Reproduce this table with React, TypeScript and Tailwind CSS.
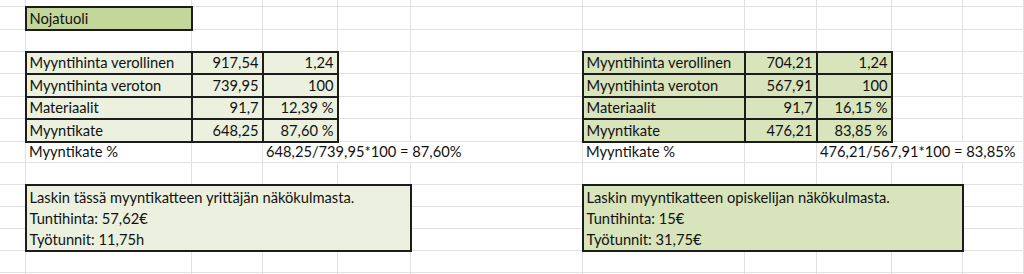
import React from "react";

type Row = { h: string; cells: React.ReactNode };

const grid = "border border-[#e1e1e1] p-0";
const box = "border-2 border-[#1c1c1c]";
const txt = "px-[3px] pb-[2px] align-bottom whitespace-nowrap overflow-hidden leading-[17px]";

const Empty = ({ n = 1 }: { n?: number }) => (
  <>
    {Array.from({ length: n }).map((_, i) => (
      <td key={i} className={grid}></td>
    ))}
  </>
);

const leftTable = [
  ["Myyntihinta verollinen", "917,54", "1,24"],
  ["Myyntihinta veroton", "739,95", "100"],
  ["Materiaalit", "91,7", "12,39 %"],
  ["Myyntikate", "648,25", "87,60 %"],
];

const rightTable = [
  ["Myyntihinta verollinen", "704,21", "1,24"],
  ["Myyntihinta veroton", "567,91", "100"],
  ["Materiaalit", "91,7", "16,15 %"],
  ["Myyntikate", "476,21", "83,85 %"],
];

const TextBox = ({ lines, bg }: { lines: string[]; bg: string }) => (
  <td colSpan={4} rowSpan={3} className={`${box} ${bg} p-0 align-top`}>
    <div className="flex flex-col pl-[3px] pt-[1px]">
      {lines.map((l) => (
        <div key={l} className="h-[21px] leading-[21px] whitespace-nowrap">
          {l}
        </div>
      ))}
    </div>
  </td>
);

export default function App() {
  const rows: Row[] = [
    { h: "h-[7px]", cells: <Empty n={11} /> },
    {
      h: "h-[23px]",
      cells: (
        <>
          <Empty />
          <td className={`${box} bg-[#c4d79b] ${txt}`}>Nojatuoli</td>
          <Empty n={9} />
        </>
      ),
    },
    { h: "h-[22px]", cells: <Empty n={11} /> },
    ...leftTable.map((l, i) => ({
      h: i === 1 || i === 3 ? "h-[23px]" : "h-[22px]",
      cells: (
        <>
          <Empty />
          <td className={`${box} bg-[#ebf1de] ${txt}`}>{l[0]}</td>
          <td className={`${box} bg-[#ebf1de] ${txt} text-right`}>{l[1]}</td>
          <td className={`${box} bg-[#ebf1de] ${txt} text-right`}>{l[2]}</td>
          <Empty n={2} />
          <td className={`${box} bg-[#d8e4bc] ${txt}`}>{rightTable[i][0]}</td>
          <td className={`${box} bg-[#d8e4bc] ${txt} text-right`}>{rightTable[i][1]}</td>
          <td className={`${box} bg-[#d8e4bc] ${txt} text-right`}>{rightTable[i][2]}</td>
          <Empty n={2} />
        </>
      ),
    })),
    {
      h: "h-[21px]",
      cells: (
        <>
          <Empty />
          <td className={`${grid} ${txt}`}>Myyntikate %</td>
          <Empty />
          <td colSpan={3} className={`${grid} ${txt}`}>
            648,25/739,95*100 = 87,60%
          </td>
          <td className={`${grid} ${txt}`}>Myyntikate %</td>
          <Empty />
          <td colSpan={3} className={`${grid} ${txt}`}>
            476,21/567,91*100 = 83,85%
          </td>
        </>
      ),
    },
    { h: "h-[22px]", cells: <Empty n={11} /> },
    {
      h: "h-[22px]",
      cells: (
        <>
          <Empty />
          <TextBox
            bg="bg-[#ebf1de]"
            lines={[
              "Laskin tässä myyntikatteen yrittäjän näkökulmasta.",
              "Tuntihinta: 57,62€",
              "Työtunnit: 11,75h",
            ]}
          />
          <Empty />
          <TextBox
            bg="bg-[#d8e4bc]"
            lines={[
              "Laskin myyntikatteen opiskelijan näkökulmasta.",
              "Tuntihinta: 15€",
              "Työtunnit: 31,75€",
            ]}
          />
          <Empty />
        </>
      ),
    },
    { h: "h-[22px]", cells: <><Empty /><Empty /><Empty /></> },
    { h: "h-[22px]", cells: <><Empty /><Empty /><Empty /></> },
    { h: "h-[22px]", cells: <Empty n={11} /> },
    { h: "h-[2px]", cells: <Empty n={11} /> },
  ];

  const cols = [
    "w-[26px]", "w-[166px]", "w-[71px]", "w-[75px]", "w-[73px]", "w-[172px]",
    "w-[162px]", "w-[72px]", "w-[75px]", "w-[71px]", "w-[61px]",
  ];

  return (
    <div className="w-[1024px] h-[274px] overflow-hidden bg-white font-['Lato',sans-serif] text-[14.7px] leading-[17px] text-[#111]">
      <table className="table-fixed border-collapse w-[1024px] -mt-[1px] -ml-[1px]">
        <colgroup>
          {cols.map((c, i) => (
            <col key={i} className={c} />
          ))}
        </colgroup>
        <tbody>
          {rows.map((r, i) => (
            <tr key={i} className={r.h}>
              {r.cells}
            </tr>
          ))}
        </tbody>
      </table>
    </div>
  );
}
